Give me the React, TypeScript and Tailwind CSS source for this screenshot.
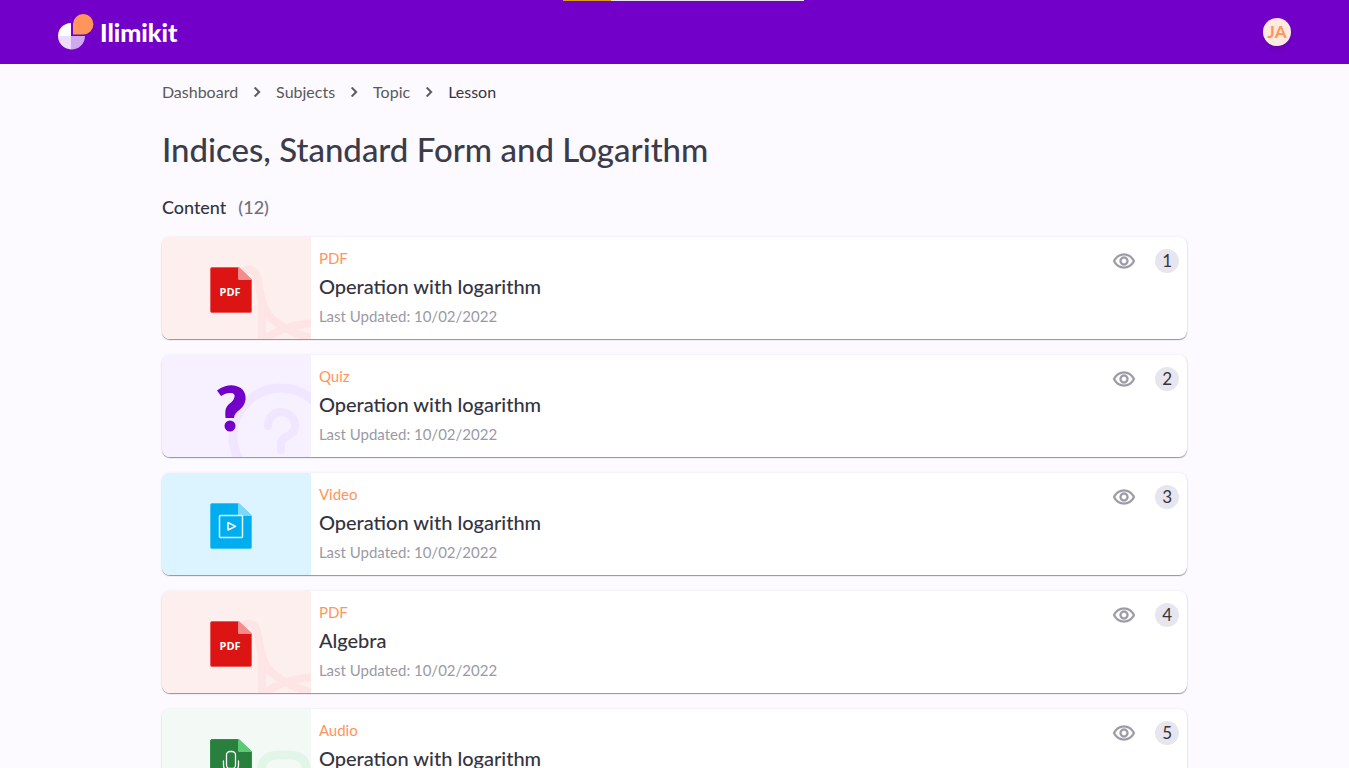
import React from "react";

type Kind = "PDF" | "Quiz" | "Video" | "Audio";

interface Lesson {
  kind: Kind;
  title: string;
  updated: string;
}

const lessons: Lesson[] = [
  { kind: "PDF", title: "Operation with logarithm", updated: "10/02/2022" },
  { kind: "Quiz", title: "Operation with logarithm", updated: "10/02/2022" },
  { kind: "Video", title: "Operation with logarithm", updated: "10/02/2022" },
  { kind: "PDF", title: "Algebra", updated: "10/02/2022" },
  { kind: "Audio", title: "Operation with logarithm", updated: "10/02/2022" },
];

const trail = ["Dashboard", "Subjects", "Topic"];

const tints: Record<Kind, string> = {
  PDF: "bg-[#fdefed]",
  Quiz: "bg-[#f7f0ff]",
  Video: "bg-[#dbf4ff]",
  Audio: "bg-[#f3faf5]",
};

function Logo() {
  return (
    <svg width="36" height="36" viewBox="0 0 36 36" aria-hidden="true">
      <path d="M13 9v13H0A13 13 0 0 1 13 9Z" fill="#fff" />
      <path d="M0 22h13v13.500A13.500 13.500 0 0 1 0 22Z" fill="#ecdcfd" />
      <path d="M13 22h14a13.500 13.500 0 0 1-14 13.500V22Z" fill="#cfa8ef" />
      <path d="M15 20.500V10.200A10.200 10.200 0 1 1 25.200 20.500Z" fill="#ff955a" />
    </svg>
  );
}

function Chevron() {
  return (
    <svg width="20" height="20" viewBox="0 0 24 24" fill="#595959" stroke="#595959" strokeWidth="0.500" aria-hidden="true">
      <path d="M10 6 8.590 7.410 13.170 12l-4.580 4.590L10 18l6-6z" />
    </svg>
  );
}

function Eye() {
  return (
    <svg width="24" height="24" viewBox="0 -0.500 24 24" fill="#9a9aa5" stroke="#9a9aa5" strokeWidth="0.300" aria-hidden="true">
      <path d="M12 6c3.790 0 7.170 2.130 8.820 5.500C19.170 14.870 15.790 17 12 17s-7.170-2.130-8.820-5.500C4.830 8.130 8.210 6 12 6m0-2C7 4 2.730 7.110 1 11.500 2.730 15.890 7 19 12 19s9.270-3.110 11-7.500C21.270 7.110 17 4 12 4zm0 5c1.380 0 2.500 1.120 2.500 2.500S13.380 14 12 14s-2.500-1.120-2.500-2.500S10.620 9 12 9m0-2c-2.480 0-4.500 2.020-4.500 4.500S9.520 16 12 16s4.500-2.020 4.500-4.500S14.480 7 12 7z" />
    </svg>
  );
}

function Sheet({ body, fold, edge }: { body: string; fold: string; edge: string }) {
  return (
    <>
      <path d="M50 30.500H76.500l13 12.500v31a1.500 1.500 0 0 1-1.500 1.500h-38a1.500 1.500 0 0 1-1.500-1.500v-42a1.500 1.500 0 0 1 1.500-1.500Z" fill={body} stroke={edge} strokeWidth="1" />
      <path d="M76 30h1l13 12.500v.5H77.500a1.500 1.500 0 0 1-1.500-1.500Z" fill={fold} />
    </>
  );
}

function Artwork({ kind }: { kind: Kind }) {
  return (
    <svg className="block" width="149" height="102" viewBox="0 0 149 102" aria-hidden="true">
      {kind === "PDF" && (
        <>
          <g fill="none" stroke="#fee5e5" strokeWidth="8">
            <path d="M78 46C77 31 92 28 95 40c5 22 4 34 19 45 12 9 22 13 38 17" />
            <path d="M100 64v46M100 104c16-12 30-16 52-18" />
          </g>
          <Sheet body="#dc1414" fold="#f68b8b" edge="#e95b5b" />
          <text x="57.500" y="58.500" fill="#fff" fontSize="11" fontWeight="700" fontFamily="'Open Sans', sans-serif">PDF</text>
        </>
      )}
      {kind === "Quiz" && (
        <>
          <g fill="none" stroke="#f1e6ff" strokeWidth="9" strokeLinecap="round">
            <circle cx="119" cy="81" r="48" />
            <path strokeWidth="8" d="M106 71c0-19 27-18 27 0 0 11-14 9-14 18v6" />
          </g>
          <path d="M55 35.500C62 30.500 69 29.500 74 31c8 2 11 9 9 16-2 8-11 9-11 16H63.500c-1-10 1-12 6-16 4-4 5-10-2-9-3 0-5 1-8.500 3Z" fill="#7300c9" />
          <circle cx="68" cy="71" r="5.500" fill="#7300c9" />
        </>
      )}
      {kind === "Video" && (
        <>
          <Sheet body="#00aeef" fold="#7bd7fb" edge="#45c3f4" />
          <rect x="57.500" y="42.500" width="23" height="22" rx="1" fill="none" stroke="#dff5ff" strokeWidth="1.500" />
          <path d="M66 49.500v7.500l7.500-3.700Z" fill="none" stroke="#fff" strokeWidth="1.500" strokeLinejoin="round" />
        </>
      )}
      {kind === "Audio" && (
        <>
          <path d="M99 104V64q0-18 18-18h10q18 0 18 18v40" fill="none" stroke="#e3f5e9" strokeWidth="9" />
          <Sheet body="#287f3e" fold="#5bc975" edge="#378b4b" />
          <g fill="none" stroke="#fff" strokeWidth="1.300" strokeLinecap="round">
            <rect x="64.500" y="42.500" width="9" height="17" rx="3.500" />
            <path d="M61.500 52v4a7.500 7.500 0 0 0 15 0v-4M69 64v4" />
          </g>
        </>
      )}
    </svg>
  );
}

function LessonCard({ lesson, position }: { lesson: Lesson; position: number }) {
  return (
    <li className="flex overflow-hidden rounded-lg bg-white shadow-[0_1px_1px_rgba(0,0,0,0.400),0_0_3px_rgba(0,0,0,0.080)]">
      <div className={`shrink-0 ${tints[lesson.kind]}`}>
        <Artwork kind={lesson.kind} />
      </div>
      <div className="flex grow flex-col px-2 pt-[11px]">
        <p className="text-[15px] leading-5 text-[#ff955a]">{lesson.kind}</p>
        <h2 className="mt-1 text-[20px] leading-7 font-medium text-[#34343f]">{lesson.title}</h2>
        <p className="mt-1 text-[15px] leading-6 text-[#9a9aa5]">Last Updated: {lesson.updated}</p>
      </div>
      <div className="flex items-start gap-[19px] pt-3 pr-2">
        <button type="button" aria-label={`View ${lesson.title}`}>
          <Eye />
        </button>
        <span className="flex size-6 items-center justify-center rounded-full bg-[#e7e6ee] text-[17px] leading-6 text-[#34343f]">
          {position}
        </span>
      </div>
    </li>
  );
}

export default function App() {
  return (
    <div className="flex h-screen flex-col bg-[#fcfaff] font-[Lato,sans-serif]">
      <header className="relative flex h-16 shrink-0 items-center justify-between bg-[#7300c9] px-[58px]">
        <div className="absolute top-0 left-[563px] flex h-px w-[241px] bg-[#e9e3ee]">
          <div className="w-12 bg-[#d89b20]" />
        </div>
        <a href="#" className="flex items-center gap-1.5 text-white">
          <Logo />
          <span className="text-[25px] leading-8 font-black">Ilimikit</span>
        </a>
        <button type="button" className="size-7 rounded-full bg-[#ffeae0] text-[17px] leading-7 font-bold text-[#ff955a] shadow-md">
          JA
        </button>
      </header>
      <main className="grow overflow-y-auto px-[12%] pb-8 [scrollbar-width:none]">
        <nav aria-label="Breadcrumb" className="mt-4 flex items-center text-[16px] leading-6 text-[#595959]">
          {trail.map((name) => (
            <React.Fragment key={name}>
              <a href="#">{name}</a>
              <span className="px-[9px]">
                <Chevron />
              </span>
            </React.Fragment>
          ))}
          <span className="text-[#34343f]">Lesson</span>
        </nav>
        <h1 className="mt-[25px] text-[33px] leading-10 font-medium text-[#3b3b4a]">Indices, Standard Form and Logarithm</h1>
        <p className="mt-6 flex gap-3 text-[18px] leading-7 font-medium text-[#34343f]">
          Content <span className="text-[#6f6f82]">(12)</span>
        </p>
        <ul className="mt-4 flex flex-col gap-4">
          {lessons.map((lesson, index) => (
            <LessonCard key={index} lesson={lesson} position={index + 1} />
          ))}
        </ul>
      </main>
    </div>
  );
}
